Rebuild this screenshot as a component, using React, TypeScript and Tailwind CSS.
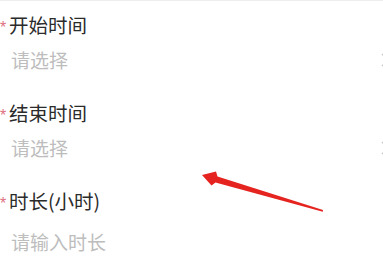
import React from "react";

const fields = [
  { label: "开始时间", placeholder: "请选择", select: true },
  { label: "结束时间", placeholder: "请选择", select: true },
  { label: "时长(小时)", placeholder: "请输入时长", select: false },
];

function Chevron() {
  return (
    <svg width="10" height="14" viewBox="0 0 10 14" className="-mr-[8px] shrink-0">
      <path d="M1 1 L7 7 L1 13" fill="none" stroke="#c8c8c8" strokeWidth="1.4" />
    </svg>
  );
}

export default function App() {
  return (
    <div
      className="relative h-[267px] w-[383px] overflow-hidden bg-white border-t border-[#eeeeee]"
      style={{ fontFamily: '"Noto Sans CJK SC", "Noto Sans", sans-serif' }}
    >
      <div className="flex flex-col pt-[11px]">
        {fields.map((f, i) => (
          <div key={f.label} className={i === 2 ? "" : "mb-[27px]"}>
            <div className="flex items-center h-[26px]">
              <span
                className="w-[9px] text-[16px] leading-none text-[#e0707f] mt-[6px]"
                style={{ fontFamily: '"Liberation Sans", sans-serif' }}
              >
                *
              </span>
              <span className="text-[19.5px] leading-[26px] text-[#2b2b2b]">{f.label}</span>
            </div>
            <div
              className={`flex items-center justify-between h-[26px] pl-[11px] ${
                i === 2 ? "mt-[15px]" : "mt-[9px]"
              }`}
            >
              <span className="text-[19px] leading-[26px] text-[#bdbdbd]">{f.placeholder}</span>
              {f.select && <Chevron />}
            </div>
          </div>
        ))}
      </div>

      <svg
        className="pointer-events-none absolute inset-0"
        width="383"
        height="267"
        viewBox="0 0 383 267"
      >
        <polygon
          points="202,174 216,170.5 217.5,175.4 323,209 322.8,210.8 215.5,181.4 211.5,184.5"
          fill="#e5231f"
        />
      </svg>
    </div>
  );
}
